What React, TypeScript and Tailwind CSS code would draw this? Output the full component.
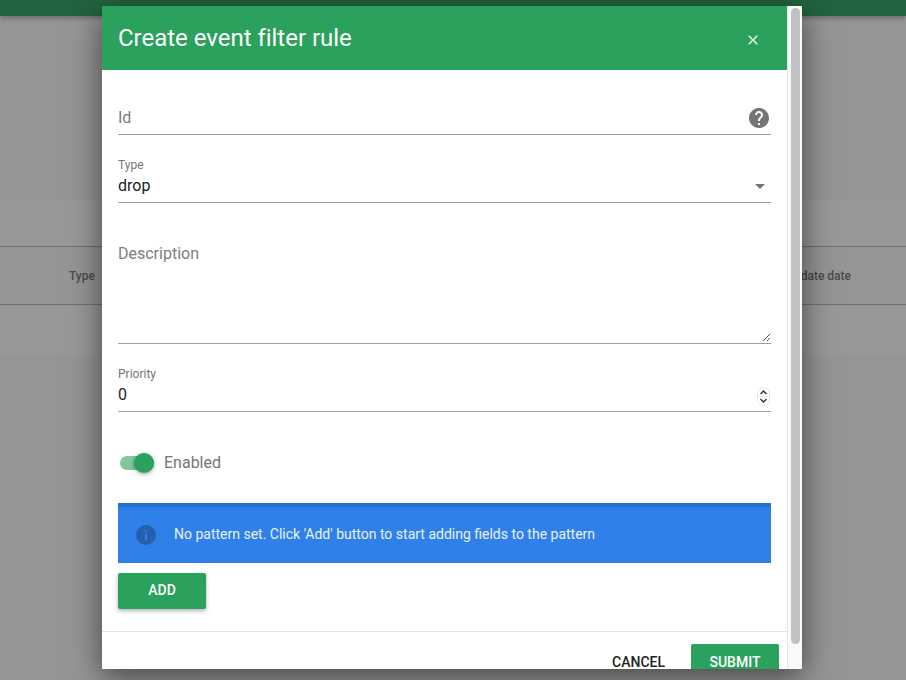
import { X } from "lucide-react";

export default function App() {
  return (
    <div className="relative h-[680px] w-[906px] overflow-hidden bg-[#959595] font-['Roboto',sans-serif]">
      {/* page behind the dialog */}
      <div className="h-4 bg-[#23633f] shadow-[0_2px_5px_rgba(0,0,0,0.3)]" />
      <div className="mt-[184px] h-[46px] bg-[#989898]" />
      <div className="flex h-[59px] items-center justify-between border-y border-[#6f6f6f] pl-[69px] pr-[55px] text-[12px] font-medium text-[#4a4a4a]">
        <span>Type</span>
        <span>date date</span>
      </div>
      <div className="h-[49px] bg-[#989898]" />

      {/* dialog */}
      <div className="absolute left-[102px] top-[6px] flex h-[663px] w-[700px] overflow-hidden bg-white shadow-[0_8px_30px_rgba(0,0,0,0.55)]">
        <div className="flex w-[685px] flex-col">
          <div className="flex h-16 shrink-0 items-center justify-between bg-[#2aa15c] pl-4 pr-[26px] text-white">
            <h2 className="text-[24px] font-normal tracking-[-0.02px]">Create event filter rule</h2>
            <X size={16} strokeWidth={1.75} className="mt-1" />
          </div>

          <div className="flex-1 px-4">
            <div className="mt-[31px] flex h-[34px] items-center justify-between border-b border-[#a0a0a0] text-[16px] text-[#7d7d7d]">
              <span>Id</span>
              <svg width="24" height="24" viewBox="0 0 24 24" className="fill-[#757575]">
                <path d="M12 2C6.48 2 2 6.48 2 12s4.48 10 10 10 10-4.48 10-10S17.52 2 12 2zm1 17h-2v-2h2v2zm2.07-7.75l-.9.92C13.45 12.9 13 13.5 13 15h-2v-.5c0-1.1.45-2.1 1.17-2.83l1.24-1.26c.37-.36.59-.86.59-1.41 0-1.1-.9-2-2-2s-2 .9-2 2H8c0-2.21 1.79-4 4-4s4 1.79 4 4c0 .88-.36 1.68-.93 2.25z" />
              </svg>
            </div>

            <div className="mt-6 h-[44px] border-b border-[#a0a0a0]">
              <div className="-translate-y-px">
                <div className="text-[12px] leading-[14px] text-[#757575]">Type</div>
                <div className="flex items-center justify-between pr-[6px] text-[16px] leading-[28px] text-[#222]">
                  <span>drop</span>
                  <span className="h-0 w-0 border-x-[5px] border-t-[5px] border-x-transparent border-t-[#757575]" />
                </div>
              </div>
            </div>

            <div className="relative mt-[29px] h-[112px] border-b border-[#a0a0a0] pt-[10px] text-[16px] leading-[24px] text-[#7d7d7d]">
              Description
              <svg width="9" height="9" viewBox="0 0 9 9" className="absolute bottom-[1px] right-0 stroke-[#555]">
                <path d="M1 8 L8 1 M5 8 L8 5" strokeWidth="1" />
              </svg>
            </div>

            <div className="mt-6 h-[44px] border-b border-[#a0a0a0]">
              <div className="-translate-y-px">
                <div className="text-[12px] leading-[14px] text-[#757575]">Priority</div>
                <div className="flex items-center justify-between pr-[1px] text-[16px] leading-[28px] text-[#222]">
                  <span>0</span>
                  <svg width="13" height="19" viewBox="0 0 13 19" className="translate-y-px">
                    <rect x="0.5" y="0.5" width="12" height="18" rx="6" fill="#fff" stroke="#e4e4e4" />
                    <path d="M0.5 9.5 H12.5" stroke="#e4e4e4" />
                    <path d="M3.5 7 L6.5 4 L9.5 7 M3.5 12 L6.5 15 L9.5 12" fill="none" stroke="#333" strokeWidth="1.4" />
                  </svg>
                </div>
              </div>
            </div>

            <div className="mt-[39px] flex h-6 items-center pl-[2px]">
              <div className="relative h-[14px] w-[34px] rounded-full bg-[#7fc79d]">
                <span className="absolute -top-[3px] right-0 h-5 w-5 rounded-full bg-[#2aa15c] shadow-[0_1px_4px_rgba(0,0,0,0.4)]" />
              </div>
              <span className="ml-[10px] text-[16px] text-[#757575]">Enabled</span>
            </div>

            <div className="mt-7 flex h-[60px] items-center border-t-4 border-[#2772cf] bg-[#2f80e8] pl-[18px] text-[14px] text-white/90">
              <svg width="20" height="20" viewBox="0 0 20 20" className="mr-[18px]">
                <circle cx="10" cy="10" r="10" fill="#2560ad" />
                <rect x="9" y="9" width="2" height="6" fill="#2f80e8" />
                <rect x="9" y="5.5" width="2" height="2" fill="#2f80e8" />
              </svg>
              <span className="-translate-y-px">No pattern set. Click 'Add' button to start adding fields to the pattern</span>
            </div>

            <button className="mt-[10px] h-9 w-[88px] rounded-[2px] bg-[#2aa15c] pb-0.5 text-[14px] font-medium text-white shadow-[0_2px_4px_rgba(0,0,0,0.3)]">
              ADD
            </button>
          </div>

          <div className="flex h-[38px] shrink-0 items-start justify-end gap-[26px] border-t border-[#e3e3e3] pr-2 pt-3 text-[14px] font-medium">
            <span className="pt-2 text-[#222]">CANCEL</span>
            <span className="flex h-9 w-[88px] items-start justify-center rounded-[2px] bg-[#2aa15c] pt-2 text-white">SUBMIT</span>
          </div>
        </div>

        {/* scrollbar */}
        <div className="w-[15px] shrink-0 border-l border-[#e6e6e6] bg-[#fafafa] pt-[2px] pl-[3px] pr-[2px]">
          <div className="h-[636px] rounded-full bg-[#c1c1c1]" />
        </div>
      </div>
    </div>
  );
}
